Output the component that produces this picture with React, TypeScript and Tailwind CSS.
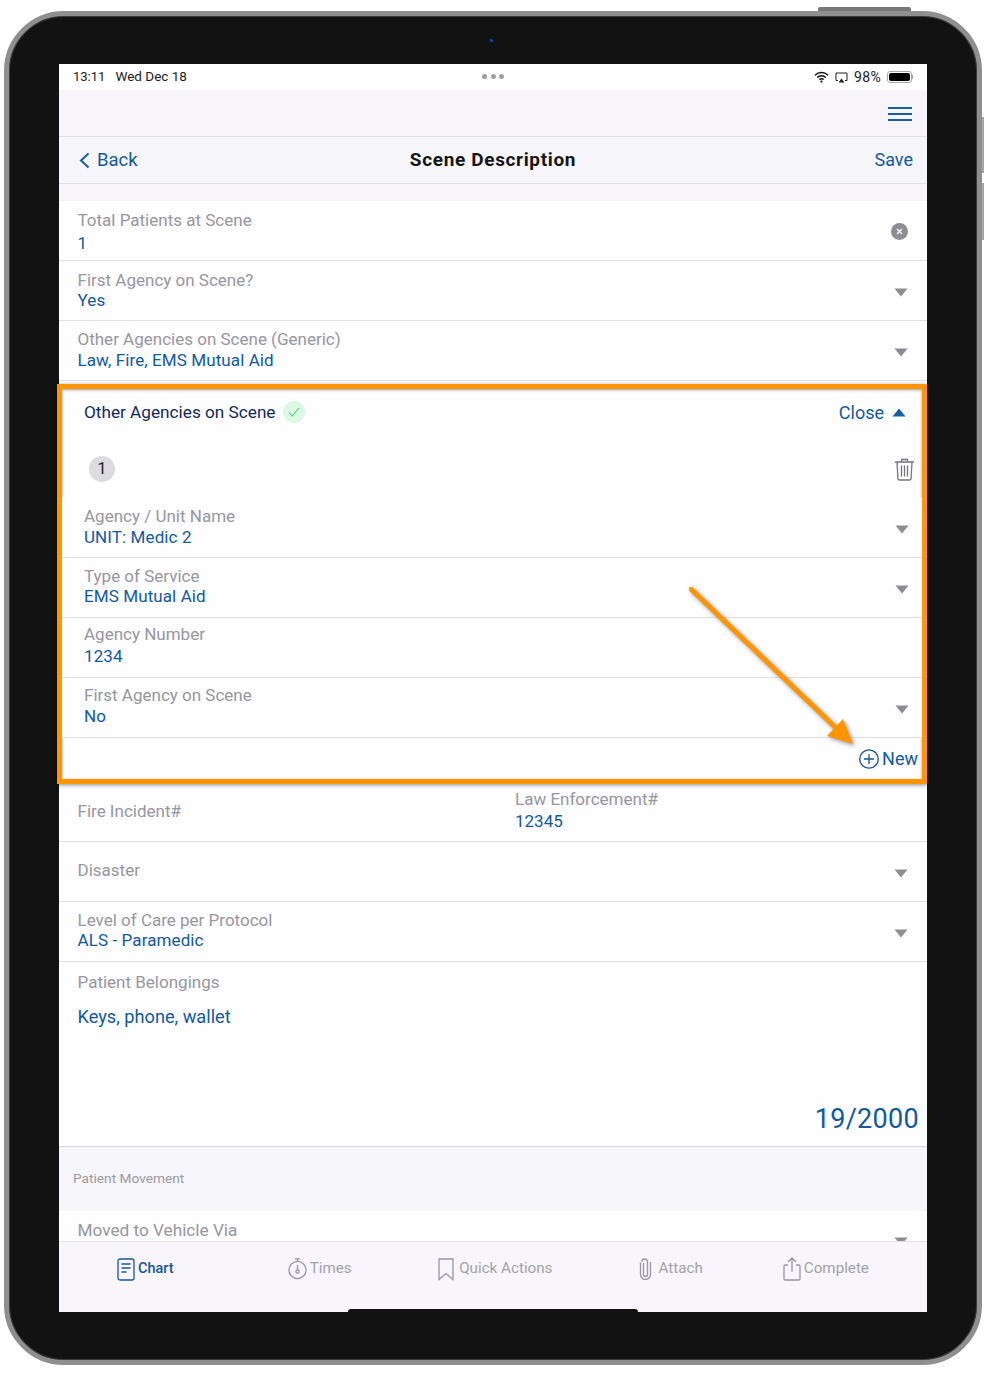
const BLUE = "text-[#125a9c]";

function Caret({ className = "" }: { className?: string }) {
  return (
    <svg width="14" height="9" viewBox="0 0 14 9" className={className}>
      <path d="M0.5 0.5h13L7 8.5z" fill="#8e8d94" />
    </svg>
  );
}

function Row({
  label,
  value,
  pad = "pl-[18.5px] pr-[19px]",
  gap = "",
  caret = true,
  shift = "mb-[2px]",
}: {
  label: string;
  value?: string;
  pad?: string;
  gap?: string;
  caret?: boolean;
  shift?: string;
}) {
  return (
    <div className={`flex h-[60px] shrink-0 items-center justify-between border-b border-[#e2e0e6] bg-[#fefdff] ${pad}`}>
      <div className={`flex flex-col ${shift}`}>
        <span className="text-[17px] leading-[20px] text-[#97979e]">{label}</span>
        {value && <span className={`text-[17px] leading-[20px] tracking-[0.1px] ${BLUE} ${gap}`}>{value}</span>}
      </div>
      {caret && <Caret className="mt-[3px]" />}
    </div>
  );
}

function TabItem({
  label,
  active,
  className,
  children,
}: {
  label: string;
  active?: boolean;
  className: string;
  children: React.ReactNode;
}) {
  return (
    <div className={`flex h-[24px] items-center ${className}`}>
      {children}
      <span className={active ? "mb-[1px] text-[14.5px] font-medium text-[#17559c]" : "mb-[1px] text-[15.2px] text-[#a2a1a8]"}>{label}</span>
    </div>
  );
}

export default function App() {
  return (
    <div className="h-[1375px] w-[986px] overflow-hidden bg-white pl-[4px] pt-[11px] font-['Roboto',sans-serif]">
      <div className="relative h-[1354px] w-[978px] rounded-[60px] border-[5px] border-[#8f8f8f] bg-[#121212] pb-[48px] pl-[50px] pr-[50px] pt-[48px] shadow-[inset_0_0_0_1px_#3a3a3a]">
        {/* hardware buttons */}
        <div className="absolute right-[66px] top-[-9px] h-[4px] w-[93px] rounded-t-[2px] bg-[#77777a]" />
        <div className="absolute right-[-7px] top-[101px] h-[56px] w-[2px] bg-[#a5a5a5]" />
        <div className="absolute right-[-7px] top-[167px] h-[57px] w-[2px] bg-[#a5a5a5]" />
        <div className="absolute left-[478px] top-[20px] flex h-[9px] w-[9px] items-center justify-center rounded-full bg-[#0b1420]">
          <div className="h-[3px] w-[3px] rounded-full bg-[#1d4f8f]" />
        </div>

        <div className="relative flex h-[1248px] w-[868px] flex-col bg-[#fefdff]">
          {/* status bar */}
          <div className="relative flex h-[26px] shrink-0 items-center justify-between bg-white pl-[14px] pr-[14px] text-[13px] text-[#1c1c1e]">
            <div className="flex items-center gap-[10px]">
              <span>13:11</span>
              <span className="mb-[1px] text-[13.5px]">Wed Dec 18</span>
            </div>
            <div className="absolute left-[423px] top-[10px] flex gap-[3.5px]">
              <div className="h-[5px] w-[5px] rounded-full bg-[#9d9da3]" />
              <div className="h-[5px] w-[5px] rounded-full bg-[#9d9da3]" />
              <div className="h-[5px] w-[5px] rounded-full bg-[#9d9da3]" />
            </div>
            <div className="flex items-center">
              <svg width="15" height="12" viewBox="0 0 15 12" className="mr-[6px]">
                <path d="M1 4.2a9.2 9.2 0 0 1 13 0M3.2 6.5a6 6 0 0 1 8.6 0M5.3 8.6a3 3 0 0 1 4.4 0" fill="none" stroke="#111" strokeWidth="1.5" />
                <circle cx="7.5" cy="10.6" r="1.1" fill="#111" />
              </svg>
              <svg width="13" height="11" viewBox="0 0 13 11" className="mr-[6px]">
                <path d="M3 8.5H1V1h11v7.5h-2" fill="none" stroke="#222" strokeWidth="1" />
                <path d="M3.5 10.5 6.5 6.5l3 4z" fill="#222" />
              </svg>
              <span className="text-[14px] tracking-[0.3px]">98%</span>
              <div className="ml-[6px] flex h-[12px] w-[25px] items-center rounded-[3px] border border-[#a8a8a8] p-[1px]">
                <div className="h-full w-full rounded-[2px] bg-black" />
              </div>
              <div className="h-[4px] w-[1px] bg-[#a8a8a8]" />
            </div>
          </div>

          {/* menu bar */}
          <div className="flex h-[47px] shrink-0 items-center justify-end border-b border-[#e2e0e6] bg-[#f7f5fa] pr-[15px] pt-[1px]">
            <div className="flex w-[24px] flex-col gap-[4px]">
              <div className="h-[2px] bg-[#17609f]" />
              <div className="h-[2px] bg-[#17609f]" />
              <div className="h-[2px] bg-[#17609f]" />
            </div>
          </div>

          {/* nav bar */}
          <div className="relative flex h-[47px] shrink-0 items-center justify-between border-b border-[#e2e0e6] bg-[#f6f5f9] pl-[20px] pr-[14px]">
            <div className="flex items-center gap-[7px]">
              <svg width="11" height="17" viewBox="0 0 11 17">
                <path d="M9.5 1.5 2 8.5l7.5 7" fill="none" stroke="#17609f" strokeWidth="2" />
              </svg>
              <span className={`mt-[1px] text-[18.5px] ${BLUE}`}>Back</span>
            </div>
            <span className="absolute left-0 right-0 text-center text-[19px] font-bold tracking-[0.65px] text-[#151517]">Scene Description</span>
            <span className={`mb-[2px] text-[18px] ${BLUE}`}>Save</span>
          </div>

          <div className="h-[17px] shrink-0 bg-[#f7f5fa]" />

          {/* form */}
          <div className="flex h-[60px] shrink-0 items-center justify-between border-b border-[#e2e0e6] pl-[18.5px] pr-[19px]">
            <div className="mt-[2px] flex flex-col">
              <span className="text-[17px] leading-[20px] text-[#97979e]">Total Patients at Scene</span>
              <span className={`mt-[3px] text-[17px] leading-[20px] ${BLUE}`}>1</span>
            </div>
            <div className="mt-[1px] flex h-[17px] w-[17px] items-center justify-center rounded-full bg-[#8e8d94] text-white">
              <svg width="7" height="7" viewBox="0 0 7 7">
                <path d="M1 1l5 5M6 1 1 6" stroke="#fff" strokeWidth="1.3" />
              </svg>
            </div>
          </div>
          <Row label="First Agency on Scene?" value="Yes" />
          <Row label="Other Agencies on Scene (Generic)" value="Law, Fire, EMS Mutual Aid" shift="mb-[2px]" gap="mt-[1px]" />

          <div className="h-[3px] shrink-0" />

          {/* highlighted section */}
          <div className="relative z-10 ml-[-2px] flex h-[400px] w-[870px] shrink-0 flex-col border-[5px] border-[#ff9500] bg-[#fefdff] shadow-[0_1px_4px_rgba(0,0,0,0.45),inset_0_1px_3px_rgba(0,0,0,0.4)]">
            <div className="flex h-[47px] items-center justify-between pl-[22px] pr-[16px]">
              <div className="flex items-center gap-[7px]">
                <span className="text-[17.2px] text-[#12295c]">Other Agencies on Scene</span>
                <div className="flex h-[22px] w-[22px] items-center justify-center rounded-full bg-[#dcf9e6]">
                  <svg width="12" height="10" viewBox="0 0 12 10">
                    <path d="M1 5.5 4.2 9 11 1" fill="none" stroke="#42d37a" strokeWidth="1.1" />
                  </svg>
                </div>
              </div>
              <div className="flex items-center gap-[8px]">
                <span className={`mb-[1px] text-[18px] ${BLUE}`}>Close</span>
                <svg width="14" height="9" viewBox="0 0 14 9">
                  <path d="M0.5 8.5h13L7 0.5z" fill="#17609f" />
                </svg>
              </div>
            </div>
            <div className="flex h-[62px] shrink-0 items-center justify-between pb-[4px] pl-[27px] pr-[7px] pt-[8px]">
              <div className="flex h-[26px] w-[26px] items-center justify-center rounded-full bg-[#dcdce0] text-[16px] text-[#1c1c1e]">1</div>
              <svg width="21" height="23" viewBox="0 0 21 23" fill="none" stroke="#77777c" strokeWidth="1.3">
                <path d="M1 4h19M7.5 4V1.5h6V4M3 4l1 17a1.5 1.5 0 0 0 1.5 1h10a1.5 1.5 0 0 0 1.5-1l1-17" />
                <path d="M7.5 7.5v11M10.5 7.5v11M13.5 7.5v11" />
              </svg>
            </div>
            <Row label="Agency / Unit Name" value="UNIT: Medic 2" pad="pl-[22px] pr-[13px]" shift="mb-[3px]" gap="mt-[1px]" />
            <Row label="Type of Service" value="EMS Mutual Aid" pad="pl-[22px] pr-[13px]" shift="mb-[4px]" />
            <Row label="Agency Number" value="1234" pad="pl-[22px] pr-[13px]" gap="mt-[2px]" caret={false} shift="mb-[6px]" />
            <Row label="First Agency on Scene" value="No" pad="pl-[22px] pr-[13px]" shift="mb-[5px]" gap="mt-[1px]" />
            <div className="flex flex-1 items-center justify-end pr-[4px]">
              <svg width="20" height="20" viewBox="0 0 20 20" className="mr-[3px]" fill="none" stroke="#1a4f8f" strokeWidth="1.3">
                <circle cx="10" cy="10" r="9.2" />
                <path d="M10 5v10M5 10h10" />
              </svg>
              <span className={`text-[18px] ${BLUE}`}>New</span>
            </div>

            {/* callout arrow */}
            <svg width="180" height="170" viewBox="0 0 180 170" className="absolute left-[627px] top-[198px] drop-shadow-[2px_2px_2px_rgba(0,0,0,0.4)]">
              <path d="M2 2 146 140" stroke="#ff9500" strokeWidth="5" strokeLinecap="round" fill="none" />
              <path d="M164 157 154 132 138 149z" fill="#ff9500" />
            </svg>
          </div>

          {/* rest of the form */}
          <div className="flex h-[58px] shrink-0 items-center border-b border-[#e2e0e6] pl-[18.5px]">
            <span className="mb-[2px] w-[437.5px] text-[17px] text-[#97979e]">Fire Incident#</span>
            <div className="mb-[6px] flex flex-col">
              <span className="text-[17px] leading-[20px] text-[#97979e]">Law Enforcement#</span>
              <span className={`mt-[2px] text-[17px] leading-[20px] ${BLUE}`}>12345</span>
            </div>
          </div>
          <Row label="Disaster" shift="mb-[4px]" />
          <Row label="Level of Care per Protocol" value="ALS - Paramedic" shift="mb-[4px]" />
          <div className="relative flex h-[185px] shrink-0 flex-col border-b border-[#d9d7de] pl-[18.5px] pr-[8px] pt-[10px]">
            <span className="text-[17px] leading-[20px] text-[#97979e]">Patient Belongings</span>
            <span className={`mt-[14px] text-[18.2px] leading-[22px] ${BLUE}`}>Keys, phone, wallet</span>
            <span className={`mb-[11px] mt-auto self-end text-[27px] leading-[32px] tracking-[0.3px] ${BLUE}`}>19/2000</span>
          </div>
          <div className="flex h-[64px] shrink-0 items-center bg-[#f6f5f9] pb-[1px] pl-[14px] text-[13.7px] text-[#9b9aa1]">Patient Movement</div>
          <div className="h-[30px] shrink-0 overflow-hidden">
            <div className="flex h-[60px] items-center justify-between pl-[18.5px] pr-[19px]">
              <span className="mb-[22px] text-[17.2px] leading-[20px] text-[#97979e]">Moved to Vehicle Via</span>
              <Caret />
            </div>
          </div>

          {/* tab bar */}
          <div className="flex flex-1 items-start border-t border-[#e2e0e6] bg-[#f8f6fb] pt-[15px]">
            <TabItem label="Chart" active className="ml-[58px] gap-[3px]">
              <svg width="18" height="23" viewBox="0 0 18 23" fill="none" stroke="#17559c" strokeWidth="1.3">
                <rect x="1" y="1" width="16" height="21" rx="2" />
                <path d="M4.5 6h9M4.5 10h9M4.5 14h5" />
              </svg>
            </TabItem>
            <TabItem label="Times" className="ml-[114px] gap-[3px]">
              <svg width="19" height="22" viewBox="0 0 19 22" fill="none" stroke="#98979e" strokeWidth="1.3">
                <circle cx="9.5" cy="12" r="8.6" />
                <path d="M9.5 3.4V.8M7 .8h5M9.5 7v5" />
                <circle cx="9.5" cy="13.5" r="1.6" />
              </svg>
            </TabItem>
            <TabItem label="Quick Actions" className="ml-[86.5px] gap-[5px]">
              <svg width="16" height="23" viewBox="0 0 16 23" fill="none" stroke="#98979e" strokeWidth="1.3">
                <path d="M1 1h14v20.5l-7-6-7 6z" />
              </svg>
            </TabItem>
            <TabItem label="Attach" className="ml-[87px] gap-[6px]">
              <svg width="13" height="22" viewBox="0 0 13 22" fill="none" stroke="#98979e" strokeWidth="1.3">
                <path d="M4.5 5v11.5a2 2 0 0 0 4 0V3.8a2.8 2.8 0 0 0-5.6 0 M1.5 4.5v12a5 5 0 0 0 10 0V4" />
              </svg>
            </TabItem>
            <TabItem label="Complete" className="ml-[80px] gap-[3px]">
              <svg width="18" height="24" viewBox="0 0 18 24" fill="none" stroke="#98979e" strokeWidth="1.3">
                <path d="M5 8H2a1 1 0 0 0-1 1v13a1 1 0 0 0 1 1h14a1 1 0 0 0 1-1V9a1 1 0 0 0-1-1h-3" />
                <path d="M9 15V1M5 5l4-4 4 4" />
              </svg>
            </TabItem>
          </div>

          {/* home indicator edge */}
          <div className="absolute bottom-0 left-[289px] h-[3px] w-[290px] rounded-t-[3px] bg-[#121212]" />
        </div>
      </div>
    </div>
  );
}
